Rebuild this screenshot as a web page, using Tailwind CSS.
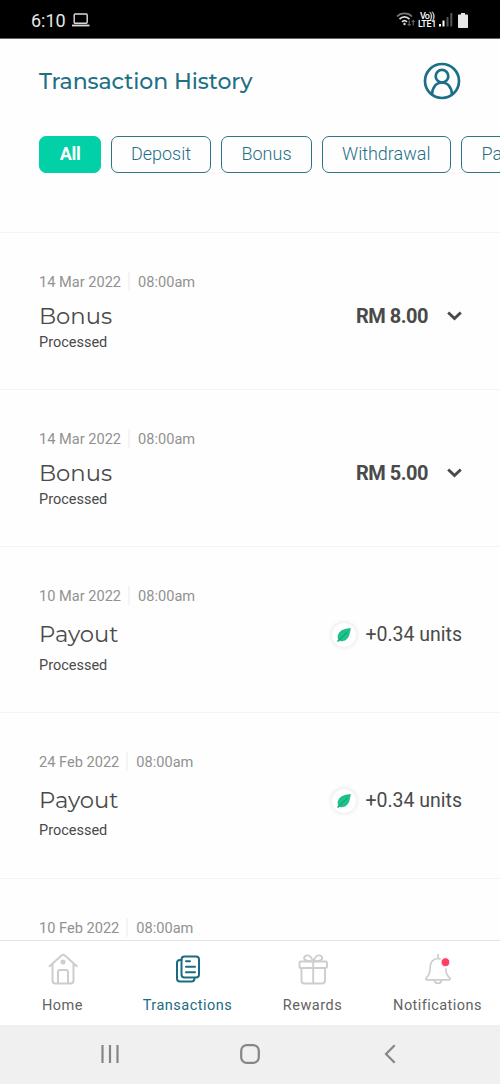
<!DOCTYPE html>
<html lang="en">
<head>
<meta charset="utf-8">
<meta name="viewport" content="width=device-width, initial-scale=1">
<title>Transaction History</title>
<script src="https://cdn.jsdelivr.net/npm/@tailwindcss/browser@4"></script>
</head>
<body class="bg-white">
<div class="flex h-[1084px] w-[500px] flex-col overflow-hidden bg-[#fefefe] font-[Roboto,sans-serif] text-[#4a4a4a]">
  <div class="flex h-[39px] shrink-0 items-center border-b border-[#6b6462] bg-black pt-[3px] pl-[31px] text-[#e6e6e6]">
    <span class="w-[41px] text-[18px] leading-5 whitespace-nowrap">6:10</span>
    <svg class="mb-[2px] h-[14px] w-[18px]" viewBox="0 0 18 14" fill="none" stroke="#dcdcdc" stroke-width="1.4"><rect x="2.2" y="1" width="13" height="9.3" rx="1"/><path d="M0 12.500h17.500" stroke-width="1.8"/></svg>
    <svg class="mb-[2px] ml-[306px] h-[17px] w-[20px] shrink-0" viewBox="0 0 20 17" fill="none" stroke="#dcdcdc" stroke-width="1.7"><path d="M1 5.500C5 1.200 12 1.200 16 5.500" stroke="#777"/><path d="M3.500 8.200C6.300 5.200 10.700 5.200 13.500 8.200M6 10.800C7.500 9.300 9.500 9.300 11 10.800"/><circle cx="8.500" cy="13" r="1.200" fill="#dcdcdc" stroke="none"/><path d="M13.200 9.500v5M11.700 13l1.500 1.700L14.700 13M17.200 14.500v-5M15.700 11l1.500-1.700L18.700 11" stroke="#777" stroke-width="1"/></svg>
    <div class="mb-[2px] ml-[1px] flex w-[20px] shrink-0 flex-col items-center text-[9px] leading-[8px] font-medium text-white"><span class="tracking-[-0.7px]">Vo))</span><span class="tracking-[-0.3px]">LTE1</span></div>
    <svg class="mb-[1px] ml-[2px] h-[14px] w-[14px] shrink-0" viewBox="0 0 14 14"><path d="M0 11h2v2.500H0zM3.500 7.500h2v6h-2z" fill="#fff"/><path d="M7.500 4h2v9.500h-2zM11.300 0h2v13.500h-2z" fill="#555"/></svg>
    <svg class="mb-[1px] ml-[5px] h-[15px] w-[10px] shrink-0" viewBox="0 0 10 15"><path d="M3 0h4v1.500h2.200q.8 0 .8.800V14.200q0 .8-.8.800H.8Q0 15 0 14.200V2.300q0-.8.800-.8H3z" fill="#e6e6e6"/></svg>
  </div>

  <header class="flex h-[84px] shrink-0 items-center justify-between pr-[39px] pl-[39px]">
    <h1 class="pt-[2px] text-[22px] leading-8 font-medium tracking-[-0.07px] whitespace-nowrap text-[#1e7084] font-[Montserrat,Inter,sans-serif]">Transaction History</h1>
    <svg class="h-[38px] w-[38px]" viewBox="0 0 38 38" fill="none" stroke="#1b7086" stroke-width="2.700"><circle cx="19" cy="19" r="17"/><circle cx="19" cy="14.200" r="6.300"/><path d="M9 32.500C9.500 25 13.500 20.500 19 20.500S28.500 25 29 32.500"/></svg>
  </header>

  <div class="flex h-[109px] shrink-0 gap-[10px] pt-[13px] pl-[39px] text-[18px] leading-[34px] font-light text-[#1f7085]">
    <div class="h-[37px] w-[62px] shrink-0 rounded-[7px] border border-[#02d0a7] bg-[#02d0a7] text-center font-bold tracking-[-0.3px] text-white">All</div>
    <div class="h-[37px] w-[100px] shrink-0 rounded-[7px] border border-[#2c7488] text-center">Deposit</div>
    <div class="h-[37px] w-[91px] shrink-0 rounded-[7px] border border-[#2c7488] text-center">Bonus</div>
    <div class="h-[37px] w-[128.500px] shrink-0 rounded-[7px] border border-[#2c7488] text-center">Withdrawal</div>
    <div class="h-[37px] w-[96px] shrink-0 rounded-[7px] border border-[#2c7488] pl-[20px] text-left">Pa</div>
  </div>

  <main class="h-[708px] shrink-0 overflow-hidden">
    <section class="h-[157px] border-t border-[#f4f4f4] pr-[38px] pl-[39px] pt-[38px]">
      <div class="flex h-5 items-center text-[14.600px] leading-5 text-[#919191]"><span class="pt-[2px]">14 Mar 2022</span><span class="mr-2 ml-[7px] h-[19px] w-[2px] bg-[#f4f4f4]"></span><span class="pt-[2px]">08:00am</span></div>
      <div class="mt-[10px] flex h-[30px] items-center justify-between">
        <h2 class="text-[22.700px] leading-[30px] font-[Montserrat,Inter,sans-serif]">Bonus</h2>
        <div class="flex items-center gap-[19px]"><span class="text-[20px] leading-6 font-bold tracking-[-0.5px]">RM 8.00</span><svg class="h-[10px] w-[15px]" viewBox="0 0 15 10" fill="none" stroke="#4a4a4a" stroke-width="3"><path d="M1.200 1.500l6.300 6 6.300-6"/></svg></div>
      </div>
      <p class="mt-[2px] text-[14.500px] leading-5">Processed</p>
    </section>
    <section class="h-[157px] border-t border-[#f4f4f4] pr-[38px] pl-[39px] pt-[38px]">
      <div class="flex h-5 items-center text-[14.600px] leading-5 text-[#919191]"><span class="pt-[2px]">14 Mar 2022</span><span class="mr-2 ml-[7px] h-[19px] w-[2px] bg-[#f4f4f4]"></span><span class="pt-[2px]">08:00am</span></div>
      <div class="mt-[10px] flex h-[30px] items-center justify-between">
        <h2 class="text-[22.700px] leading-[30px] font-[Montserrat,Inter,sans-serif]">Bonus</h2>
        <div class="flex items-center gap-[19px]"><span class="text-[20px] leading-6 font-bold tracking-[-0.5px]">RM 5.00</span><svg class="h-[10px] w-[15px]" viewBox="0 0 15 10" fill="none" stroke="#4a4a4a" stroke-width="3"><path d="M1.200 1.500l6.300 6 6.300-6"/></svg></div>
      </div>
      <p class="mt-[2px] text-[14.500px] leading-5">Processed</p>
    </section>
    <section class="h-[166px] border-t border-[#f4f4f4] pr-[38px] pl-[39px] pt-[38px]">
      <div class="flex h-5 items-center text-[14.600px] leading-5 text-[#919191]"><span class="pt-[2px]">10 Mar 2022</span><span class="mr-2 ml-[7px] h-[19px] w-[2px] bg-[#f4f4f4]"></span><span class="pt-[2px]">08:00am</span></div>
      <div class="mt-[14px] flex h-[30px] items-center justify-between">
        <h2 class="text-[22.700px] leading-[30px] font-[Montserrat,Inter,sans-serif]">Payout</h2>
        <div class="flex items-center gap-[9px] pt-[2px]"><div class="flex h-6 w-6 items-center justify-center rounded-full bg-white shadow-[0_0_4px_1px_rgba(0,0,0,0.09)]"><svg class="h-[14px] w-[14px]" viewBox="0 0 14 14"><path d="M13.400.6C8.500.8 3.500 2.200 1.600 6.200.8 8.200.9 10 1.500 11.300L.5 13.300 1.200 13.700 2.400 12.500C6 13.700 9.800 12 11.500 8.300 12.600 5.800 12.800 3 13.400.6Z" fill="#1cc489" stroke="#0ea672" stroke-width=".6"/><path d="M1.800 12.400L10.500 3.800" fill="none" stroke="#0a8f63" stroke-width=".9"/></svg></div><span class="text-[19.500px] leading-6">+0.34 units</span></div>
      </div>
      <p class="mt-[7px] text-[14.500px] leading-5">Processed</p>
    </section>
    <section class="h-[166px] border-t border-[#f4f4f4] pr-[38px] pl-[39px] pt-[38px]">
      <div class="flex h-5 items-center text-[14.600px] leading-5 text-[#919191]"><span class="pt-[2px]">24 Feb 2022</span><span class="mr-2 ml-[7px] h-[19px] w-[2px] bg-[#f4f4f4]"></span><span class="pt-[2px]">08:00am</span></div>
      <div class="mt-[14px] flex h-[30px] items-center justify-between">
        <h2 class="text-[22.700px] leading-[30px] font-[Montserrat,Inter,sans-serif]">Payout</h2>
        <div class="flex items-center gap-[9px] pt-[2px]"><div class="flex h-6 w-6 items-center justify-center rounded-full bg-white shadow-[0_0_4px_1px_rgba(0,0,0,0.09)]"><svg class="h-[14px] w-[14px]" viewBox="0 0 14 14"><path d="M13.400.6C8.500.8 3.500 2.200 1.600 6.200.8 8.200.9 10 1.500 11.300L.5 13.300 1.200 13.700 2.400 12.500C6 13.700 9.800 12 11.500 8.300 12.600 5.800 12.800 3 13.400.6Z" fill="#1cc489" stroke="#0ea672" stroke-width=".6"/><path d="M1.800 12.400L10.500 3.800" fill="none" stroke="#0a8f63" stroke-width=".9"/></svg></div><span class="text-[19.500px] leading-6">+0.34 units</span></div>
      </div>
      <p class="mt-[6px] text-[14.500px] leading-5">Processed</p>
    </section>
    <section class="border-t border-[#f4f4f4] pr-[38px] pl-[39px] pt-[38px]">
      <div class="flex h-5 items-center text-[14.600px] leading-5 text-[#919191]"><span class="pt-[2px]">10 Feb 2022</span><span class="mr-2 ml-[7px] h-[19px] w-[2px] bg-[#f4f4f4]"></span><span class="pt-[2px]">08:00am</span></div>
    </section>
  </main>

  <nav class="grid h-[85px] shrink-0 grid-cols-4 border-t border-[#e3e3e3] bg-white pt-[12px] text-[14.500px] leading-5 tracking-[0.5px] text-[#626262]">
    <div class="flex flex-col items-center gap-[11px]"><svg class="h-8 w-8" viewBox="0 0 32 32" fill="none" stroke="#cdcdcd" stroke-width="2" stroke-linecap="round" stroke-linejoin="round"><path d="M2.500 13.200L14.500 2.500q1.700-1.400 3.400 0L29.800 13.200M5.500 11v16.500q0 3 3 3h15q3 0 3-3V11M11 30V19q0-2 2-2h6q2 0 2 2v11"/><circle cx="16" cy="9" r="2.500" fill="#cdcdcd" stroke="none"/></svg><span>Home</span></div>
    <div class="flex flex-col items-center gap-[11px] text-[#1b6c82]"><svg class="h-8 w-8" viewBox="0 0 32 32" fill="none" stroke="#1b6c82" stroke-width="2" stroke-linecap="round" stroke-linejoin="round"><rect x="9.500" y="3.500" width="17.500" height="21" rx="3"/><path d="M9.500 7H8q-3 0-3 3V25.500q0 3 3 3h11.500q3 0 3-3M14 8.300h4M14 13.800h9M14 19.300h9"/></svg><span>Transactions</span></div>
    <div class="flex flex-col items-center gap-[11px]"><svg class="h-8 w-8" viewBox="0 0 32 32" fill="none" stroke="#cdcdcd" stroke-width="1.900" stroke-linecap="round" stroke-linejoin="round"><rect x="2.500" y="8.500" width="27.500" height="6.500" rx="1.200"/><path d="M4.500 15v12.500q0 3 3 3h17.500q3 0 3-3V15M16.200 8.500v22M16.200 8.500C10 8.500 6.500 7 7.200 4.500S12 1.500 13.700 4Q15.200 6 16.200 8.500ZM16.200 8.500C22.400 8.500 25.900 7 25.200 4.500S20.400 1.500 18.700 4Q17.200 6 16.200 8.500Z"/></svg><span>Rewards</span></div>
    <div class="flex flex-col items-center gap-[11px]"><svg class="h-8 w-8" viewBox="0 0 32 32" fill="none" stroke="#cdcdcd" stroke-width="1.700" stroke-linecap="round" stroke-linejoin="round"><path d="M16 1.500v4M16 5.500C11 5.500 8.200 9.500 8.200 14c0 6-1 8.500-3.800 10.800-1 .9-.5 2 .7 2h21.800c1.200 0 1.700-1.100.7-2C25.300 22.800 24 20.500 23.900 16M12.200 27c.8 4.300 6.800 4.300 7.600 0M16 5.500l2 .3"/><circle cx="23.500" cy="9.200" r="4.500" fill="#ff4066" stroke="#fff" stroke-width="1"/></svg><span class="tracking-[0.45px]">Notifications</span></div>
  </nav>

  <div class="flex h-[59px] shrink-0 items-center justify-between bg-[#f0f0f0] pr-[104px] pb-[2px] pl-[101px]">
    <svg class="h-5 w-[18px]" viewBox="0 0 18 20" stroke="#868686" stroke-width="2.200"><path d="M1.500 1v18M9 1v18M16.500 1v18"/></svg>
    <svg class="mr-[3px] h-5 w-5" viewBox="0 0 20 20" fill="none" stroke="#868686" stroke-width="2.200"><rect x="1.200" y="1.200" width="17.600" height="17.600" rx="5.500"/></svg>
    <svg class="h-5 w-3" viewBox="0 0 12 20" fill="none" stroke="#868686" stroke-width="2.200"><path d="M10.700 1.200L2 10l8.700 8.800"/></svg>
  </div>
</div>
</body>
</html>
